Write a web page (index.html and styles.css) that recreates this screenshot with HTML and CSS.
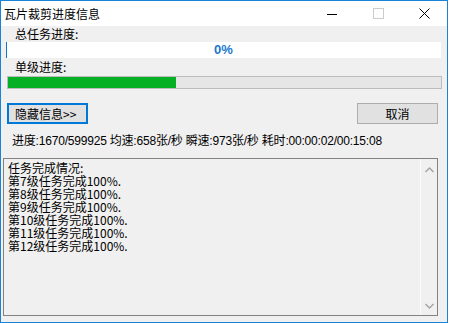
FILE: index.html
```html
<!DOCTYPE html>
<html lang="zh">
<head>
  <meta charset="UTF-8">
  <title>瓦片裁剪进度信息</title>
  <link rel="stylesheet" href="styles.css">
</head>
<body>
  <div class="window">
    <div class="titlebar">
      <div class="title">瓦片裁剪进度信息</div>
      <div class="caption-btn">
        <svg width="10" height="10" viewBox="0 0 10 10"><path d="M0 5.5h10" stroke="#000" stroke-width="1"/></svg>
      </div>
      <div class="caption-btn">
        <svg width="11" height="11" viewBox="0 0 11 11"><rect x="0.5" y="0.5" width="10" height="10" fill="none" stroke="#cccccc"/></svg>
      </div>
      <div class="caption-btn">
        <svg width="11" height="11" viewBox="0 0 11 11"><path d="M0.5 0.5l10 10M10.5 0.5l-10 10" stroke="#000" stroke-width="1"/></svg>
      </div>
    </div>

    <div class="client">
      <div class="label label-total">总任务进度:</div>
      <div class="bar-total">
        <div class="bar-total-fill"></div>
        <span class="bar-total-text">0%</span>
      </div>

      <div class="label label-step">单级进度:</div>
      <div class="bar-step">
        <div class="bar-step-fill" style="width: 168px"></div>
      </div>

      <div class="buttons">
        <div class="btn btn-default">隐藏信息&gt;&gt;</div>
        <div class="btn">取消</div>
      </div>

      <div class="status">进度:1670/599925 均速:658张/秒 瞬速:973张/秒 耗时:00:00:02/00:15:08</div>

      <div class="log">
        <div class="log-text">
          <div class="log-line">任务完成情况:</div>
          <div class="log-line">第7级任务完成100%.</div>
          <div class="log-line">第8级任务完成100%.</div>
          <div class="log-line">第9级任务完成100%.</div>
          <div class="log-line">第10级任务完成100%.</div>
          <div class="log-line">第11级任务完成100%.</div>
          <div class="log-line">第12级任务完成100%.</div>
        </div>
        <div class="scrollbar">
          <svg width="9" height="6" viewBox="0 0 9 6"><path d="M0.5 5l4-4 4 4" fill="none" stroke="#a3a3a3" stroke-width="1.4"/></svg>
          <svg width="9" height="6" viewBox="0 0 9 6"><path d="M0.5 1l4 4 4-4" fill="none" stroke="#a3a3a3" stroke-width="1.4"/></svg>
        </div>
      </div>
    </div>
  </div>
</body>
</html>
```

FILE: styles.css
```css
body {
  margin: 0;
  padding: 0;
  background-color: #fff;
  font-family: "Liberation Sans", "Noto Sans CJK SC", sans-serif;
  font-size: 12px;
  color: #000;
}

.window {
  width: 446px;
  height: 321px;
  border: 1px solid #1883d7;
  display: flex;
  flex-direction: column;
}

.titlebar {
  height: 25px;
  background-color: #fff;
  display: flex;
  align-items: center;
}

.title {
  flex: 1;
  padding-left: 3px;
  font-family: "Noto Sans CJK SC", sans-serif;
  font-size: 12px;
  line-height: 14px;
  color: #000;
}

.caption-btn {
  width: 46px;
  height: 25px;
  display: flex;
  align-items: center;
  justify-content: center;
}

.client {
  flex: 1;
  background-color: #f0f0f0;
  display: flex;
  flex-direction: column;
}

.label {
  padding-left: 14px;
  line-height: 16px;
  font-family: "Noto Sans CJK SC", sans-serif;
}

.label-total {
  height: 16px;
}

.label-step {
  height: 18px;
  line-height: 18px;
}

.bar-total {
  margin-left: 5px;
  width: 435px;
  height: 16px;
  background-color: #fff;
  position: relative;
  display: flex;
}

.bar-total-fill {
  width: 1px;
  background-color: #0a78d4;
}

.bar-total-text {
  position: absolute;
  left: 0;
  right: 0;
  top: 0;
  text-align: center;
  line-height: 16px;
  font-size: 13px;
  font-weight: bold;
  color: #1c79cf;
}

.bar-step {
  margin-left: 6px;
  width: 433px;
  height: 11px;
  border: 1px solid #bcbcbc;
  background-color: #e6e6e6;
  display: flex;
}

.bar-step-fill {
  background-color: #06b025;
}

.buttons {
  margin-top: 14px;
  padding-left: 6px;
  padding-right: 9px;
  display: flex;
  justify-content: space-between;
}

.btn {
  width: 79px;
  height: 19px;
  border: 1px solid #adadad;
  background-color: #e1e1e1;
  display: flex;
  align-items: center;
  justify-content: center;
  font-family: "Noto Sans CJK SC", sans-serif;
}

.btn-default {
  width: 71px;
  height: 17px;
  border: 2px solid #0078d7;
  justify-content: flex-start;
  padding-left: 6px;
}

.status {
  margin-top: 9px;
  padding-left: 11px;
  height: 25px;
  line-height: 16px;
  letter-spacing: -0.2px;
  white-space: nowrap;
}

.log {
  margin-left: 2px;
  width: 433px;
  height: 156px;
  border: 1px solid #828282;
  display: flex;
}

.log-text {
  flex: 1;
  padding: 2px 0 0 4px;
  font-family: "Noto Sans CJK SC", sans-serif;
}

.log-line {
  height: 13px;
  line-height: 13px;
}

.scrollbar {
  width: 16px;
  border-left: 1px solid #fbfbfb;
  display: flex;
  flex-direction: column;
  justify-content: space-between;
  align-items: center;
  padding: 8px 0 6px;
}
```
